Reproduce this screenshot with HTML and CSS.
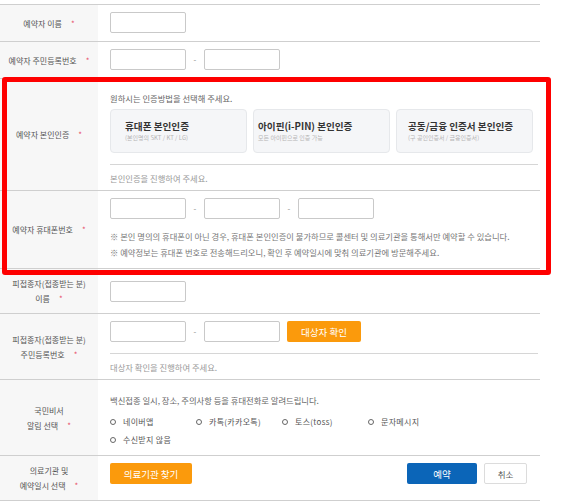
FILE: index.html
```html
<!DOCTYPE html>
<html>
    <head>
        <meta charset="UTF-8">
        <title>예약</title>
        <link rel="stylesheet" href="styles.css">
    </head>
    <body>
        <div id="main">
            <div class="form">
                <div class="row">
                    <div class="lbl"><p>예약자 이름<span class="req">*</span></p></div>
                    <div class="val">
                        <div class="line"><input class="in" type="text"></div>
                    </div>
                </div>
                <div class="row">
                    <div class="lbl"><p>예약자 주민등록번호<span class="req">*</span></p></div>
                    <div class="val">
                        <div class="line">
                            <input class="in" type="text"><span class="dash">-</span><input class="in" type="text">
                        </div>
                    </div>
                </div>
                <div class="row">
                    <div class="lbl"><p>예약자 본인인증<span class="req">*</span></p></div>
                    <div class="val auth">
                        <div class="auth-box">
                            <p class="guide">원하시는 인증방법을 선택해 주세요.</p>
                            <div class="auth-list">
                                <div class="auth-btn">
                                    <b>휴대폰 본인인증</b>
                                    <small>(본인명의 SKT / KT / LG)</small>
                                </div>
                                <div class="auth-btn ipin">
                                    <b>아이핀(i-PIN) 본인인증</b>
                                    <small>모든 아이핀으로 인증 가능</small>
                                </div>
                                <div class="auth-btn cert">
                                    <b>공동/금융 인증서 본인인증</b>
                                    <small>(구 공인인증서 / 금융인증서)</small>
                                </div>
                            </div>
                        </div>
                        <p class="status">본인인증을 진행하여 주세요.</p>
                    </div>
                </div>
                <div class="row">
                    <div class="lbl"><p>예약자 휴대폰번호<span class="req">*</span></p></div>
                    <div class="val phone">
                        <div class="line">
                            <input class="in" type="text"><span class="dash">-</span><input class="in" type="text"><span class="dash">-</span><input class="in" type="text">
                        </div>
                        <p class="note">※ 본인 명의의 휴대폰이 아닌 경우, 휴대폰 본인인증이 불가하므로 콜센터 및 의료기관을 통해서만 예약할 수 있습니다.</p>
                        <p class="note">※ 예약정보는 휴대폰 번호로 전송해드리오니, 확인 후 예약일시에 맞춰 의료기관에 방문해주세요.</p>
                    </div>
                </div>
                <div class="row">
                    <div class="lbl"><p>피접종자(접종받는 분)<br>이름<span class="req">*</span></p></div>
                    <div class="val mid">
                        <div class="line"><input class="in" type="text"></div>
                    </div>
                </div>
                <div class="row">
                    <div class="lbl"><p>피접종자(접종받는 분)<br>주민등록번호<span class="req">*</span></p></div>
                    <div class="val target">
                        <div class="line">
                            <input class="in" type="text"><span class="dash">-</span><input class="in" type="text">
                            <button class="o_btn check">대상자 확인</button>
                        </div>
                        <p class="status">대상자 확인을 진행하여 주세요.</p>
                    </div>
                </div>
                <div class="row">
                    <div class="lbl"><p>국민비서<br>알림 선택<span class="req">*</span></p></div>
                    <div class="val notice">
                        <p class="guide">백신접종 일시, 장소, 주의사항 등을 휴대전화로 알려드립니다.</p>
                        <div class="radios">
                            <label class="radio"><i></i>네이버앱</label>
                            <label class="radio"><i></i>카톡(카카오톡)</label>
                            <label class="radio"><i></i>토스(toss)</label>
                            <label class="radio"><i></i>문자메시지</label>
                            <label class="radio"><i></i>수신받지 않음</label>
                        </div>
                    </div>
                </div>
                <div class="row">
                    <div class="lbl"><p>의료기관 및<br>예약일시 선택<span class="req">*</span></p></div>
                    <div class="val last">
                        <button class="o_btn find">의료기관 찾기</button>
                        <div class="actions">
                            <button class="b_btn">예약</button>
                            <button class="c_btn">취소</button>
                        </div>
                    </div>
                </div>
            </div>
            <div class="mark"></div>
        </div>
    </body>
</html>
```

FILE: styles.css
```css
body {
    margin: 0;
    background: #fff;
    font-family: "Noto Sans CJK KR", "Noto Sans", sans-serif;
    color: #666;
}
#main {
    position: relative;
}
p {
    margin: 0;
}
.form {
    width: 540px;
    margin-top: 4px;
    border-top: 1px solid #cfcfcf;
}
.row {
    display: grid;
    grid-template-columns: 98px 1fr;
    border-bottom: 1px solid #cfcfcf;
}
.lbl {
    background: #f7f7f7;
    display: flex;
    align-items: center;
    justify-content: center;
    text-align: center;
    font-size: 8px;
    line-height: 15px;
    color: #555;
    padding: 7px 2px;
}
.req {
    color: #e8506a;
    margin-left: 9px;
}
.val {
    padding: 7px 2px 8px 12px;
    font-size: 8.3px;
    line-height: 14px;
}
.val.mid {
    display: flex;
    align-items: center;
    padding-top: 0;
    padding-bottom: 0;
}
.line {
    display: flex;
    align-items: center;
    height: 21px;
}
.in {
    box-sizing: border-box;
    width: 76px;
    height: 21px;
    border: 1px solid #c9c9c9;
    border-radius: 2px;
    margin: 0;
    background: #fff;
}
.dash {
    width: 18px;
    text-align: center;
    color: #888;
    font-size: 8px;
}
.val.auth {
    padding-top: 12px;
    padding-bottom: 5px;
}
.auth-box {
    padding-bottom: 11px;
    border-bottom: 1px solid #d6d6d6;
}
.guide {
    color: #666;
    margin-bottom: 4px;
}
.auth-list {
    display: grid;
    grid-template-columns: repeat(3, 137px);
    gap: 6px;
}
.auth-btn {
    box-sizing: border-box;
    height: 44px;
    background: #f5f6f8;
    border: 1px solid #e6e8eb;
    border-radius: 4px;
    padding-left: 14px;
    display: flex;
    flex-direction: column;
    justify-content: center;
}
.auth-btn.ipin {
    padding-left: 4px;
}
.auth-btn.cert {
    padding-left: 11px;
}
.auth-btn b {
    font-size: 9.6px;
    line-height: 13px;
    color: #333;
}
.auth-btn small {
    font-size: 6px;
    line-height: 9px;
    color: #b5b5b5;
}
.status {
    color: #999;
    padding-top: 6px;
}
.val.phone {
    padding-bottom: 8px;
}
.note {
    color: #777;
    line-height: 16px;
}
.phone .line {
    margin-bottom: 9px;
}
.val.target {
    padding-bottom: 5px;
}
.target .line {
    height: auto;
    padding-bottom: 11px;
    border-bottom: 1px solid #d6d6d6;
}
.o_btn {
    height: 21px;
    border: none;
    border-radius: 2px;
    background: #fb9a0c;
    color: #fff;
    font-family: inherit;
    font-size: 9.5px;
    padding: 0;
    cursor: pointer;
}
.check {
    width: 74px;
    margin-left: 7px;
}
.val.notice {
    padding-top: 13px;
}
.notice .guide {
    margin-bottom: 8px;
}
.radios {
    display: grid;
    grid-template-columns: repeat(4, 86px);
    row-gap: 4px;
}
.radio {
    display: flex;
    align-items: center;
    color: #555;
    font-size: 8px;
    letter-spacing: 0.3px;
}
.radio i {
    box-sizing: border-box;
    width: 6px;
    height: 6px;
    border: 1px solid #666;
    border-radius: 50%;
    margin-right: 7px;
}
.val.last {
    display: flex;
    align-items: flex-start;
    justify-content: space-between;
    padding-bottom: 16px;
}
.find {
    width: 82px;
}
.actions {
    display: flex;
    gap: 7px;
    margin-right: 11px;
}
.b_btn {
    width: 70px;
    height: 21px;
    border: none;
    border-radius: 2px;
    background: #0b65b8;
    color: #fff;
    font-family: inherit;
    font-size: 9.5px;
    padding: 0;
}
.c_btn {
    width: 43px;
    height: 21px;
    border: 1px solid #dcdcdc;
    border-radius: 2px;
    background: #fff;
    color: #555;
    font-family: inherit;
    font-size: 8.5px;
    padding: 0;
}
.mark {
    position: absolute;
    left: 2px;
    top: 73px;
    width: 549px;
    height: 198px;
    box-sizing: border-box;
    border: 5px solid #fe0000;
    border-radius: 3px;
}
```
